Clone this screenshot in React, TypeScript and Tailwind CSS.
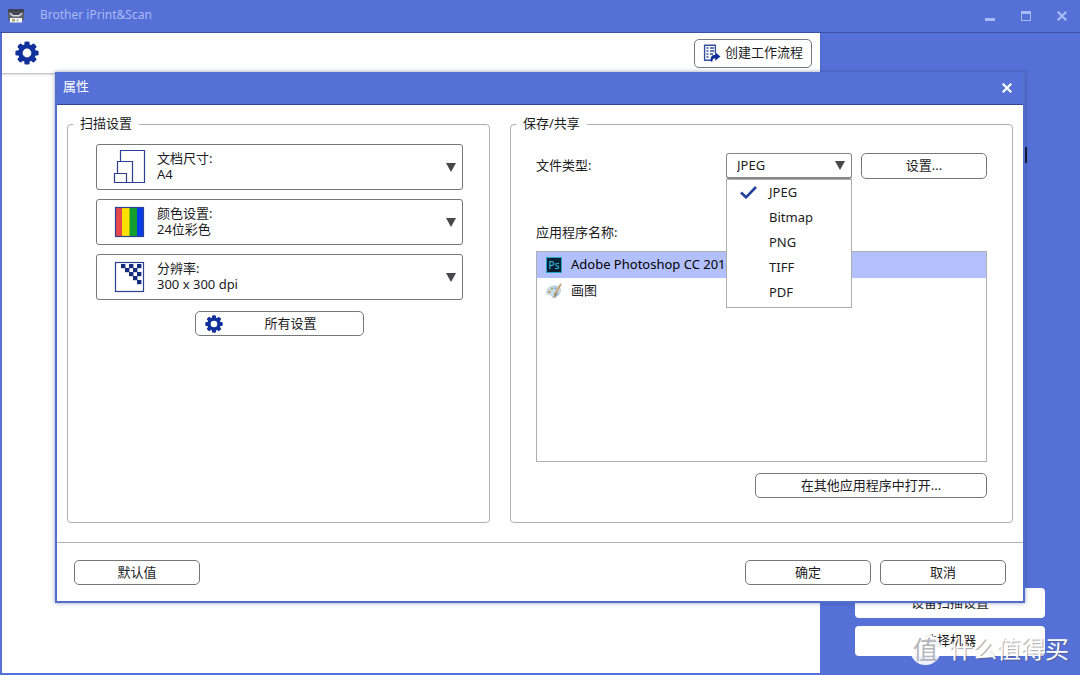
import React from "react";

const NAVY = "#12309b";

function GearIcon({ className }: { className?: string }) {
  return (
    <svg viewBox="0 0 24 24" className={className} fill={NAVY} aria-hidden="true">
      {[0, 45, 90, 135].map((a) => (
        <rect key={a} x="9.4" y="0.4" width="5.2" height="23.2" rx="1.4" transform={`rotate(${a} 12 12)`} />
      ))}
      <circle cx="12" cy="12" r="9" />
      <circle cx="12" cy="12" r="4.4" fill="#fff" />
    </svg>
  );
}

function ScannerIcon() {
  return (
    <svg viewBox="0 0 18 16" className="h-4 w-[18px]" aria-hidden="true">
      <rect x="1" y="1" width="16" height="4" rx="1" fill="#3f4350" />
      <rect x="1" y="4" width="16" height="8" rx="1" fill="#5d616d" />
      <path d="M3.500 4.500h11L12 8H6z" fill="#3f4350" />
      <path d="M3 4.500l3.500 2.500h5L15 4.500v2L12 8.500H6L3 6.500z" fill="#d9dbe2" />
      <rect x="3" y="10" width="12" height="4.500" fill="#f6f6f2" />
      <rect x="5" y="11" width="3" height="2.500" fill="#a4a878" />
      <rect x="9.500" y="11" width="2" height="2.500" fill="#b9bdc8" />
    </svg>
  );
}

function WorkflowIcon() {
  return (
    <svg viewBox="0 0 18 18" className="h-[18px] w-[18px]" aria-hidden="true">
      <path d="M8 16.3H1.600V1.200h10.800V9" fill="none" stroke="#34509f" strokeWidth="1.400" />
      <path d="M3.500 4h2M3.500 7h2M3.500 10h2M3.500 13h2M7 4h4M7 7h4M7 10h3" stroke="#34509f" strokeWidth="1.300" />
      <path d="M12.200 8.200l5.300 4.400-5.300 4.200v-2.500c-1.800 0-2.600.6-2.800 3.200H7.600c-.3-4.400 1-6.600 4.600-6.700z" fill={NAVY} />
    </svg>
  );
}

function PagesIcon() {
  return (
    <svg viewBox="0 0 34 36" className="h-9 w-[34px]" fill="#fff" stroke="#2c4194" strokeWidth="1.200" aria-hidden="true">
      <path d="M8.500 1.500h24v32h-24z" />
      <path d="M5.500 12.500h15v21h-15z" />
      <path d="M2.500 24.500h12v9h-12z" />
    </svg>
  );
}

function ColourIcon() {
  return (
    <svg viewBox="0 0 34 36" className="h-9 w-[34px]" aria-hidden="true">
      <rect x="3" y="4" width="8" height="28" fill="#e8474a" />
      <rect x="10" y="4" width="8" height="28" fill="#ffe100" />
      <rect x="17.500" y="4" width="8" height="28" fill="#12a02c" />
      <rect x="25" y="4" width="7" height="28" fill="#0a3be8" />
      <rect x="3.500" y="3.500" width="28" height="29" fill="none" stroke="#2c4194" strokeWidth="1.200" />
    </svg>
  );
}

function ResolutionIcon() {
  const cells = [
    [9, 5], [17, 5], [25, 5],
    [13, 9], [21, 9],
    [17, 13], [25, 13],
    [21, 17],
    [25, 21],
  ];
  return (
    <svg viewBox="0 0 34 36" className="h-9 w-[34px]" aria-hidden="true">
      <rect x="3.500" y="3.500" width="28" height="29" fill="#fff" stroke="#2c4194" strokeWidth="1.200" />
      {cells.map(([x, y]) => (
        <rect key={`${x}-${y}`} x={x} y={y} width="4.400" height="4.200" fill="#142b7e" />
      ))}
    </svg>
  );
}

function Triangle() {
  return (
    <svg viewBox="0 0 10 9" className="pointer-events-none h-[9px] w-[10px] shrink-0" aria-hidden="true">
      <path d="M0 0h10L5 9z" fill="#48484c" />
    </svg>
  );
}

function CloseIcon({ className }: { className?: string }) {
  return (
    <svg viewBox="0 0 10 10" className={className} stroke="currentColor" strokeWidth="2.200" aria-hidden="true">
      <path d="M.7.7l8.600 8.600M9.300.7L.7 9.300" />
    </svg>
  );
}

function PhotoshopIcon() {
  return (
    <span aria-hidden="true" className="flex h-4 w-4 shrink-0 items-center justify-center border border-[#2aa5c4] bg-[#062033] text-[10px] leading-none text-[#3ccbe6]">
      Ps
    </span>
  );
}

function PaintIcon() {
  return (
    <svg viewBox="0 0 16 16" className="h-4 w-4 shrink-0" aria-hidden="true">
      <path d="M.5 9.500C.5 5.500 4.500 2.800 8.500 2.800s6.500 2 6 5.200-3.500 6.800-7.200 6.800c-1.500 0-1-2-2.200-2.700C3.600 11.300.5 11.800.5 9.500z" fill="#c6dbe8" stroke="#a3b8c8" strokeWidth=".5" />
      <circle cx="3.500" cy="9" r="1.200" fill="#d09a5b" />
      <circle cx="6" cy="5.700" r="1.200" fill="#9cb870" />
      <circle cx="9.300" cy="5.300" r="1.100" fill="#7ba3cc" />
      <circle cx="10" cy="11" r="1.800" fill="#5eabd0" />
      <path d="M15 .8L9.300 11" stroke="#c9a070" strokeWidth="1.800" />
      <path d="M9.900 9.800L8.300 14.500" stroke="#b08a60" strokeWidth="1.800" />
    </svg>
  );
}

function PushButton({ children, className = "" }: { children: React.ReactNode; className?: string }) {
  return (
    <button type="button" className={`rounded-[5px] border border-[#77777b] bg-white text-center ${className}`}>
      {children}
    </button>
  );
}

function SettingSelect({ id, label, value, icon }: { id: string; label: string; value: string; icon: React.ReactNode }) {
  return (
    <div className="flex h-[46px] items-center rounded-[3px] border border-[#77777b] bg-white pr-[6px] pl-[15px]">
      {icon}
      <div className="ml-[11px] flex min-w-0 flex-1 flex-col pb-[2px]">
        <label htmlFor={id} className="leading-4">{label}</label>
        <select id={id} className="h-4 w-full appearance-none bg-transparent leading-4 outline-none">
          <option>{value}</option>
        </select>
      </div>
      <Triangle />
    </div>
  );
}

function FileTypePicker() {
  const types = ["JPEG", "Bitmap", "PNG", "TIFF", "PDF"];
  return (
    <div className="relative w-[126px] shrink-0">
      <div className="flex h-[26px] items-center rounded-[3px] border border-b-2 border-[#88888c] bg-white pr-[6px] pl-[10px]">
        <select id="file-type" className="min-w-0 flex-1 appearance-none bg-transparent outline-none">
          {types.map((t) => (
            <option key={t}>{t}</option>
          ))}
        </select>
        <Triangle />
      </div>
      <ul role="listbox" aria-label="文件类型" className="absolute inset-x-0 top-full z-10 border border-[#acacb0] bg-white pb-[2px]">
        {types.map((t, i) => (
          <li key={t} role="option" aria-selected={i === 0} className="flex h-[25px] items-center pl-[13px]">
            <span className="w-[29px]">
              {i === 0 && (
                <svg viewBox="0 0 17 13" className="h-[13px] w-[17px]" fill="none" stroke="#22409c" strokeWidth="2.600" aria-hidden="true">
                  <path d="M1 6.500L6 11.300 16 1" />
                </svg>
              )}
            </span>
            {t}
          </li>
        ))}
      </ul>
    </div>
  );
}

function PropertiesDialog() {
  return (
    <section role="dialog" aria-labelledby="dialog-title" className="absolute inset-x-[55px] top-[72px] border-2 border-t-0 border-[#536fcb] bg-white shadow-[0_0_4px_rgba(40,60,130,0.5)]">
      <header className="flex h-[33px] items-center justify-between border-b border-[#33478f] bg-[#5570d6] pr-[11px] pl-[6px] text-white">
        <h2 id="dialog-title" className="pb-[2px]">属性</h2>
        <button type="button" aria-label="关闭">
          <CloseIcon className="h-[10px] w-[10px]" />
        </button>
      </header>

      <div className="grid grid-cols-[423fr_503fr] gap-5 px-[10px] pt-[9px] pb-[19px]">
        <fieldset className="min-w-0 rounded-[4px] border border-[#b0b0b3] pt-[10px] pr-[26px] pl-[28px]">
          <legend className="-ml-[23px] h-5 px-[7px] leading-[18px]">扫描设置</legend>
          <div className="flex flex-col gap-[9px]">
            <SettingSelect id="doc-size" label="文档尺寸:" value="A4" icon={<PagesIcon />} />
            <SettingSelect id="colour" label="颜色设置:" value="24位彩色" icon={<ColourIcon />} />
            <SettingSelect id="resolution" label="分辨率:" value="300 x 300 dpi" icon={<ResolutionIcon />} />
          </div>
          <PushButton className="mx-auto mt-[11px] flex h-[25px] w-[169px] items-center px-[9px]">
            <GearIcon className="h-[18px] w-[18px]" />
            <span className="flex-1 pl-[4px]">所有设置</span>
          </PushButton>
        </fieldset>

        <fieldset className="min-w-0 rounded-[4px] border border-[#b0b0b3] px-[25px] pt-[19px] pb-[24px]">
          <legend className="-ml-[20px] h-5 px-[7px] leading-[18px]">保存/共享</legend>
          <div className="flex items-center gap-[9px]">
            <label htmlFor="file-type" className="flex-1">文件类型:</label>
            <FileTypePicker />
            <PushButton className="h-[26px] w-[126px]">设置...</PushButton>
          </div>
          <p id="apps-label" className="mt-[43px] h-5 leading-5">应用程序名称:</p>
          <ul role="listbox" aria-labelledby="apps-label" className="mt-[9px] h-[211px] border border-[#aeaeb4]">
            <li role="option" aria-selected="true" className="flex h-[26px] items-center gap-[9px] bg-[#b2c1fd] pl-[9px] text-black">
              <PhotoshopIcon />
              Adobe Photoshop CC 2018
            </li>
            <li role="option" aria-selected="false" className="flex h-[26px] items-center gap-[9px] pl-[9px]">
              <PaintIcon />
              画图
            </li>
          </ul>
          <PushButton className="mt-[11px] ml-auto block h-[25px] w-[232px]">在其他应用程序中打开...</PushButton>
        </fieldset>
      </div>

      <footer className="flex gap-[9px] border-t border-[#b3b3b6] px-[17px] pt-[17px] pb-4">
        <PushButton className="mr-auto h-[25px] w-[126px]">默认值</PushButton>
        <PushButton className="h-[25px] w-[126px]">确定</PushButton>
        <PushButton className="h-[25px] w-[126px]">取消</PushButton>
      </footer>
    </section>
  );
}

function Watermark() {
  return (
    <div className="pointer-events-none absolute right-[11px] bottom-[10px] flex items-center gap-2 text-white">
      <span className="flex h-[31px] w-[31px] items-center justify-center rounded-full bg-white/90 text-[25px] leading-none text-[#b4b6bc]">值</span>
      <span className="text-[24px] leading-8 [text-shadow:1px_1px_1px_rgba(90,90,100,0.55)]">什么值得买</span>
    </div>
  );
}

export default function App() {
  return (
    <div className="relative flex min-h-screen flex-col bg-[#5570d6] font-['Noto_Sans','Noto_Sans_CJK_SC',sans-serif] text-[13px] text-[#1c1c1e]">
      <header className="flex h-[33px] items-center border-b border-[#3c52a5] px-[7px] text-[#a9bbf6]">
        <ScannerIcon />
        <h1 className="ml-[15px] pb-[2px] text-[12px]">Brother iPrint&amp;Scan</h1>
        <div className="ml-auto flex items-center gap-[26px] pr-[6px]">
          <button type="button" aria-label="最小化" className="h-[10px] w-[10px] pt-[7px]">
            <span className="block h-[3px] bg-current" />
          </button>
          <button type="button" aria-label="最大化" className="h-[10px] w-[10px] border border-t-[3px] border-current" />
          <button type="button" aria-label="关闭窗口">
            <CloseIcon className="h-[10px] w-[10px]" />
          </button>
        </div>
      </header>

      <div className="flex flex-1 pb-[2px] pl-[2px]">
        <main className="flex flex-1 flex-col bg-white">
          <div className="flex h-[41px] items-center justify-between border-b border-[#c4c4c8] pr-[8px] pl-[13px] shadow-[0_1px_2px_rgba(0,0,0,0.15)]">
            <button type="button" aria-label="设置">
              <GearIcon className="h-6 w-6" />
            </button>
            <PushButton className="flex h-[29px] items-center gap-1 px-[8px]">
              <WorkflowIcon />
              创建工作流程
            </PushButton>
          </div>
        </main>
        <aside className="flex w-[260px] flex-col gap-2 px-[35px] pb-[17px]">
          <span aria-hidden="true" className="mt-[114px] mr-[18px] mb-auto h-4 w-[2px] self-end bg-[#10131f]" />
          <button type="button" className="h-[30px] rounded-[4px] bg-white">设备扫描设置</button>
          <button type="button" className="h-[30px] rounded-[4px] bg-white">选择机器</button>
        </aside>
      </div>

      <PropertiesDialog />
      <Watermark />
    </div>
  );
}
